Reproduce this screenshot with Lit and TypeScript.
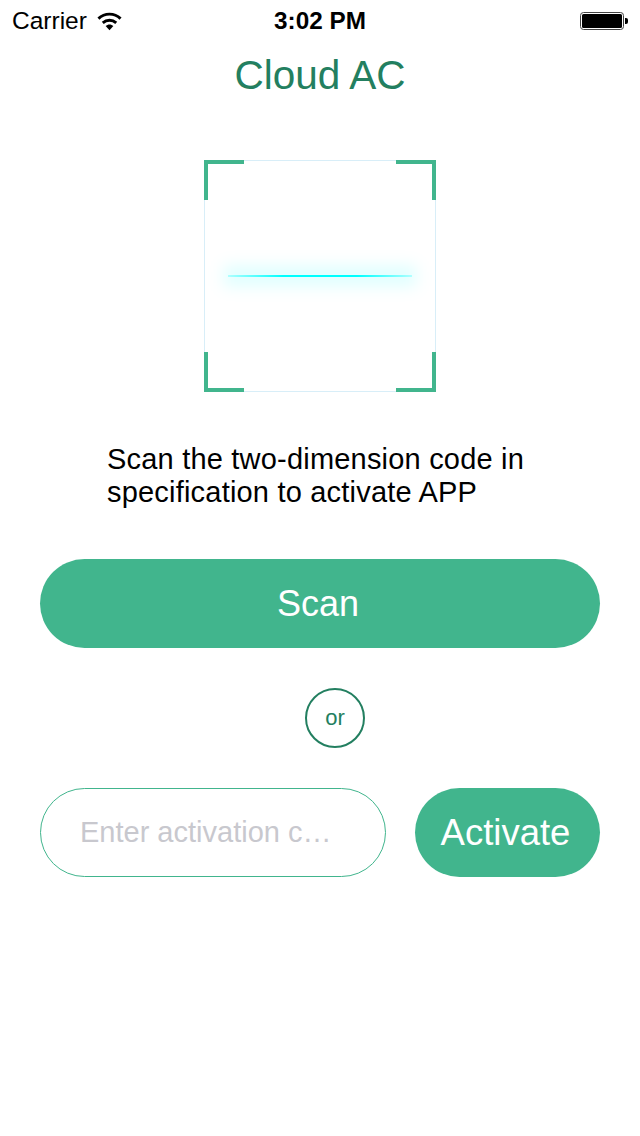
import { LitElement, html, css } from "lit";
import { customElement } from "lit/decorators.js";

@customElement("app-root")
export class AppRoot extends LitElement {
  static styles = css`
    :host { display: block; width: 640px; height: 1136px; background: #fff; font-family: "Liberation Sans", Arial, sans-serif; color: #000; overflow: hidden; }
    .status { height: 40px; display: grid; grid-template-columns: 1fr auto 1fr; align-items: center; padding: 1px 12px 0; box-sizing: border-box; font-size: 24px; }
    .left { display: flex; align-items: center; gap: 10px; font-size: 24.5px; }
    .time { font-weight: 700; font-size: 24.3px; }
    .right { display: flex; justify-content: flex-end; align-items: center; }
    .title { margin: 0; height: 70px; line-height: 70px; text-align: center; font-size: 40.5px; font-weight: 400; color: #237f60; }
    .frame-wrap { display: flex; justify-content: center; padding-top: 50px; }
    .frame { position: relative; width: 232px; height: 232px; box-sizing: border-box; border: 1px solid #d8eef8; }
    .c { position: absolute; width: 40px; height: 40px; border: 0 solid #41b58d; box-sizing: border-box; }
    .tl { left: -1px; top: -1px; border-width: 4px 0 0 4px; }
    .tr { right: -1px; top: -1px; border-width: 4px 4px 0 0; }
    .bl { left: -1px; bottom: -1px; border-width: 0 0 4px 4px; }
    .br { right: -1px; bottom: -1px; border-width: 0 4px 4px 0; }
    .glow { position: absolute; left: 19px; top: 105px; width: 192px; height: 20px; background: rgba(0,255,255,.13); filter: blur(8px); }
    .beam { position: absolute; left: 23px; top: 114px; width: 184px; height: 2px; background: linear-gradient(90deg, rgba(0,255,255,.25), #00ffff 30%, #00ffff 70%, rgba(0,255,255,.25)); }
    .desc { margin: 51px 0 0 107px; font-size: 29px; line-height: 33px; letter-spacing: .2px; }
    .scan { display: flex; align-items: center; justify-content: center; margin: 50px 40px 0; height: 89px; border-radius: 44.5px; background: #41b58d; color: #fff; font-size: 36px; padding-right: 4px; box-sizing: border-box; }
    .or-row { display: flex; justify-content: center; margin-top: 40px; padding-left: 30px; }
    .or { width: 60px; height: 60px; border-radius: 50%; border: 2px solid #237f60; box-sizing: border-box; display: flex; align-items: center; justify-content: center; color: #237f60; font-size: 22px; }
    .bottom { display: flex; gap: 29px; margin: 40px 40px 0; height: 89px; }
    .input { width: 346px; border: 1px solid #41b58d; border-radius: 44.5px; box-sizing: border-box; display: flex; align-items: center; padding-left: 39px; font-size: 29px; color: #c8c8ce; }
    .activate { flex: 1; border-radius: 44.5px; background: #41b58d; color: #fff; font-size: 36.5px; display: flex; align-items: center; justify-content: center; padding-right: 4px; box-sizing: border-box; }
  `;

  render() {
    return html`
      <div class="status">
        <div class="left">
          <span>Carrier</span>
          <svg width="25" height="20" viewBox="0 0 26 20"><path d="M1.500 7.500C4.500 4.600 8.500 2.800 13 2.800s8.500 1.800 11.500 4.700" fill="none" stroke="#000" stroke-width="3"/><path d="M6 12c2-1.800 4.300-2.800 7-2.800s5 1 7 2.800" fill="none" stroke="#000" stroke-width="3"/><path d="M9 15.200c1.100-1 2.500-1.600 4-1.600s2.900.6 4 1.600l-4 4.300z" fill="#000"/></svg>
        </div>
        <div class="time">3:02 PM</div>
        <div class="right">
          <svg width="48" height="20" viewBox="0 0 48 20"><rect x="0.500" y="1.500" width="43" height="17" rx="3" fill="#fff" stroke="#444"/><rect x="2" y="3" width="40" height="14" rx="1.500" fill="#000"/><path d="M45 7h1a2 2 0 0 1 2 2v2a2 2 0 0 1-2 2h-1z" fill="#000"/></svg>
        </div>
      </div>
      <h1 class="title">Cloud AC</h1>
      <div class="frame-wrap">
        <div class="frame">
          <span class="c tl"></span><span class="c tr"></span><span class="c bl"></span><span class="c br"></span>
          <div class="glow"></div><div class="beam"></div>
        </div>
      </div>
      <p class="desc">Scan the two-dimension code in<br />specification to activate APP</p>
      <div class="scan">Scan</div>
      <div class="or-row"><div class="or">or</div></div>
      <div class="bottom">
        <div class="input">Enter activation c…</div>
        <div class="activate">Activate</div>
      </div>
    `;
  }
}
